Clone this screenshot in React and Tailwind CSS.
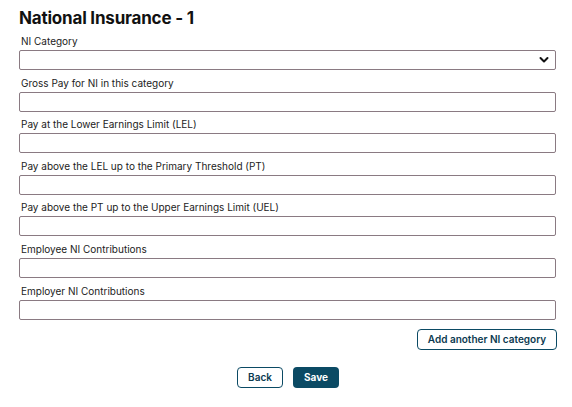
const fields = [
  'Gross Pay for NI in this category',
  'Pay at the Lower Earnings Limit (LEL)',
  'Pay above the LEL up to the Primary Threshold (PT)',
  'Pay above the PT up to the Upper Earnings Limit (UEL)',
  'Employee NI Contributions',
  'Employer NI Contributions',
];

function Field({ label, children }) {
  return (
    <div className="flex flex-col">
      <label className="pl-[2px] text-[10px] leading-[13px] text-[#222]">{label}</label>
      <div className="mt-[2px]">{children}</div>
    </div>
  );
}

export default function App() {
  return (
    <div
      className="min-h-[407px] w-[572px] bg-white pl-[19px] pr-[16px] pt-[6px] text-[#111]"
      style={{ fontFamily: 'Inter, "Noto Sans", sans-serif' }}
    >
      <h2 className="text-[17px] font-bold leading-[24px] tracking-[-0.2px]">National Insurance - 1</h2>

      <div className="mt-[5px] flex flex-col gap-[6.6px]">
        <Field label="NI Category">
          <div className="relative h-[20px] w-full rounded-[2px] border border-[#8a7a82] bg-white">
            <svg
              className="absolute right-[6px] top-[5px]"
              width="10"
              height="8"
              viewBox="0 0 10 8"
              fill="none"
            >
              <path d="M1.5 2L5 5.5L8.5 2" stroke="#111" strokeWidth="2" strokeLinecap="round" strokeLinejoin="round" />
            </svg>
          </div>
        </Field>

        {fields.map((f) => (
          <Field key={f} label={f}>
            <input className="block h-[20px] w-full rounded-[2px] border border-[#8a7a82] bg-white outline-none" />
          </Field>
        ))}
      </div>

      <div className="mt-[9px] flex justify-end">
        <button className="mr-[-1px] h-[21px] w-[140px] rounded-[4px] border border-[#0b4a64] bg-white text-[10px] font-semibold text-[#0b3a50]">
          Add another NI category
        </button>
      </div>

      <div className="mt-[17px] flex justify-center gap-[10px] pl-[1px]">
        <button className="h-[21px] w-[46px] rounded-[4px] border border-[#0b4a64] bg-white text-[10px] font-semibold text-[#0b3a50]">
          Back
        </button>
        <button className="h-[21px] w-[46px] rounded-[4px] bg-[#0b4a64] text-[10px] font-bold text-white">
          Save
        </button>
      </div>
    </div>
  );
}
